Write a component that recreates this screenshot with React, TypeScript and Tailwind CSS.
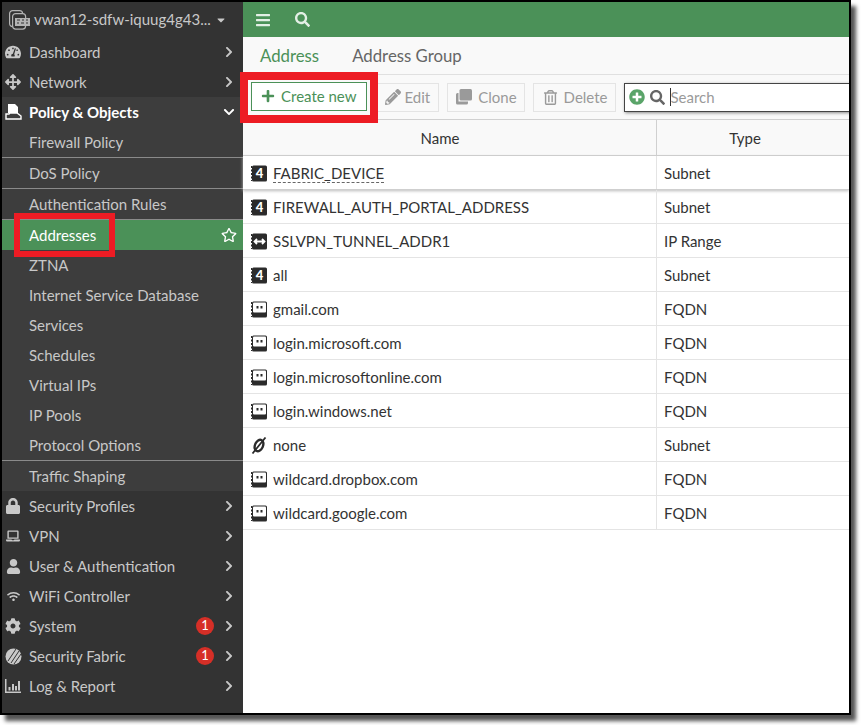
import React from 'react';
import {
  FaTachometerAlt,
  FaArrowsAlt,
  FaLock,
  FaLaptop,
  FaUser,
  FaWifi,
  FaCog,
  FaPencilAlt,
  FaRegTrashAlt,
  FaPlus,
  FaPlusCircle,
  FaSearch,
  FaBars,
  FaChevronRight,
  FaChevronDown,
  FaRegStar,
  FaCaretDown,
} from 'react-icons/fa';

const topItems = [
  { label: 'Dashboard', icon: <FaTachometerAlt size={16} /> },
  { label: 'Network', icon: <FaArrowsAlt size={16} /> },
];

const subItems = [
  { label: 'Firewall Policy', border: true },
  { label: 'DoS Policy', border: true },
  { label: 'Authentication Rules', border: true },
  { label: 'Addresses', active: true },
  { label: 'ZTNA' },
  { label: 'Internet Service Database' },
  { label: 'Services' },
  { label: 'Schedules' },
  { label: 'Virtual IPs' },
  { label: 'IP Pools' },
  { label: 'Protocol Options', border: true },
  { label: 'Traffic Shaping' },
];

const bottomItems = [
  { label: 'Security Profiles', icon: <FaLock size={16} /> },
  { label: 'VPN', icon: <FaLaptop size={14} /> },
  { label: 'User & Authentication', icon: <FaUser size={15} /> },
  { label: 'WiFi Controller', icon: <FaWifi size={13} /> },
  { label: 'System', icon: <FaCog size={16} />, badge: 1 },
  { label: 'Security Fabric', icon: <FabricIcon />, badge: 1 },
  { label: 'Log & Report', icon: <LogIcon /> },
];

const rows = [
  { name: 'FABRIC_DEVICE', type: 'Subnet', kind: 'subnet', first: true },
  { name: 'FIREWALL_AUTH_PORTAL_ADDRESS', type: 'Subnet', kind: 'subnet' },
  { name: 'SSLVPN_TUNNEL_ADDR1', type: 'IP Range', kind: 'range' },
  { name: 'all', type: 'Subnet', kind: 'subnet' },
  { name: 'gmail.com', type: 'FQDN', kind: 'fqdn' },
  { name: 'login.microsoft.com', type: 'FQDN', kind: 'fqdn' },
  { name: 'login.microsoftonline.com', type: 'FQDN', kind: 'fqdn' },
  { name: 'login.windows.net', type: 'FQDN', kind: 'fqdn' },
  { name: 'none', type: 'Subnet', kind: 'none' },
  { name: 'wildcard.dropbox.com', type: 'FQDN', kind: 'fqdn' },
  { name: 'wildcard.google.com', type: 'FQDN', kind: 'fqdn' },
];

function FabricIcon() {
  return (
    <svg width="17" height="17" viewBox="0 0 17 17">
      <circle cx="8.5" cy="8.5" r="8" fill="#c8c8c8" />
      <path d="M3 13L11 1M6 15L14 3M9 16L16 6" stroke="#333" strokeWidth="1" fill="none" />
    </svg>
  );
}

function LogIcon() {
  return (
    <svg width="16" height="14" viewBox="0 0 16 14" fill="#c8c8c8">
      <path d="M0 0h1.5v12.5H16V14H0z" />
      <path d="M3.5 8h2v3.5h-2zM7 5h2v6.5H7zM10 7h2v4.5h-2zM13 2h2v9.5h-2z" />
    </svg>
  );
}

function PolicyIcon() {
  return (
    <svg width="17" height="16" viewBox="0 0 17 16" fill="none">
      <path d="M3 0h7l3 3v6H3z" fill="#fff" />
      <path d="M1 15V10h3l1-1h7l4 3v3z" stroke="#fff" strokeWidth="1.4" />
    </svg>
  );
}

function DeviceIcon() {
  return (
    <svg width="21" height="20" viewBox="0 0 21 20" fill="none">
      <rect x="0.6" y="0.6" width="13" height="16" rx="3" stroke="#b4b4b4" strokeWidth="1.2" />
      <rect x="3.6" y="3.6" width="13" height="15.5" rx="3" fill="#333" stroke="#b4b4b4" strokeWidth="1.2" />
      <rect x="6" y="8" width="15" height="8" fill="#b4b4b4" />
      <path d="M8 10h3M13 10h2M17 10h2M8 13h2M12 13h3M17 13h2" stroke="#333" strokeWidth="1" />
    </svg>
  );
}

function CloneIcon() {
  return (
    <svg width="16" height="16" viewBox="0 0 16 16" fill="#9a9a9a">
      <path d="M5 0h9.5A1.5 1.5 0 0 1 16 1.500V10a1.500 1.500 0 0 1-1.500 1.500H5A1.500 1.500 0 0 1 3.500 10V1.500A1.500 1.500 0 0 1 5 0z" />
      <path d="M2.500 4v8.500H12V14a1.500 1.500 0 0 1-1.500 1.500h-9A1.500 1.500 0 0 1 0 14V5.500A1.500 1.500 0 0 1 1.500 4z" />
    </svg>
  );
}

function AddressIcon({ kind }: { kind: string }) {
  if (kind === 'none') {
    return (
      <svg width="16" height="17" viewBox="0 0 16 17" fill="none" stroke="#2b2b2b">
        <ellipse cx="8" cy="8.5" rx="4" ry="6" transform="rotate(24 8 8.500)" strokeWidth="2.400" />
        <path d="M1.500 16.500L14.500 0.500" strokeWidth="1.800" />
      </svg>
    );
  }
  return (
    <svg width="16" height="17" viewBox="0 0 16 17">
      <rect x="1" y="0.5" width="15" height="16" rx="1.5" fill="#2b2b2b" />
      <path d="M0.5 1v15" stroke="#2b2b2b" strokeDasharray="2 1.5" />
      {kind === 'subnet' && (
        <text x="8.5" y="13" textAnchor="middle" fontSize="13" fontWeight="900" fill="#fff" fontFamily="Lato, sans-serif">
          4
        </text>
      )}
      {kind === 'range' && (
        <path d="M4 8.5h9M6 6L3.500 8.500 6 11M11 6l2.500 2.500L11 11" stroke="#fff" strokeWidth="1.800" fill="none" />
      )}
      {kind === 'fqdn' && (
        <>
          <rect x="2" y="1.500" width="13" height="10" rx="1" fill="#fff" />
          <rect x="5.500" y="5" width="2" height="2.500" fill="#2b2b2b" />
          <rect x="9.500" y="5" width="2" height="2.500" fill="#2b2b2b" />
        </>
      )}
    </svg>
  );
}

function NavRow({ label, icon, badge }: { label: string; icon: React.ReactNode; badge?: number }) {
  return (
    <div className="flex h-[30px] items-center text-[#c8c8c8]">
      <span className="mr-[5px] flex w-[22px] shrink-0 justify-center">{icon}</span>
      <span className="flex-1">{label}</span>
      {badge && (
        <span className="mr-[9px] flex h-[18px] w-[18px] items-center justify-center rounded-full bg-[#d62f27] text-[13px] text-white">
          {badge}
        </span>
      )}
      <FaChevronRight size={12} className="mr-[8px]" />
    </div>
  );
}

export default function App() {
  return (
    <div className="relative h-[725px] w-[861px] bg-white font-['Lato',sans-serif] text-[15px]">
      <div className="flex h-[715px] w-[851px] overflow-hidden border-2 border-black bg-white">
        <aside className="flex w-[241px] shrink-0 flex-col bg-[#333333]">
          <div className="flex h-[35px] items-center pl-[7px] text-[#c8c8c8]">
            <DeviceIcon />
            <span className="ml-[4px] flex-1 whitespace-nowrap">vwan12-sdfw-iquug4g43...</span>
            <FaCaretDown size={12} className="mr-[16px]" />
          </div>
          {topItems.map((item) => (
            <NavRow key={item.label} {...item} />
          ))}
          <div className="bg-[#3d3d3d]">
            <div className="flex h-[30px] items-center font-bold text-white">
              <span className="mr-[5px] flex w-[22px] shrink-0 justify-center">
                <PolicyIcon />
              </span>
              <span className="flex-1">Policy &amp; Objects</span>
              <FaChevronDown size={12} className="mr-[8px]" />
            </div>
            {subItems.map((item) => (
              <div
                key={item.label}
                className={`flex items-center justify-between pl-[27px] ${
                  item.active ? 'h-[30px] bg-[#4b9158] text-white' : 'text-[#c8c8c8]'
                } ${!item.active && item.border ? 'h-[31px] border-b border-[#8a8a8a]' : ''} ${
                  !item.active && !item.border ? 'h-[30px]' : ''
                }`}
              >
                {item.label}
                {item.active && <FaRegStar size={16} className="mr-[6px]" />}
              </div>
            ))}
          </div>
          {bottomItems.map((item) => (
            <NavRow key={item.label} {...item} />
          ))}
        </aside>

        <main className="flex min-w-0 flex-1 flex-col text-[#333]">
          <div className="flex h-[35px] shrink-0 items-center gap-[24px] bg-[#4b9158] pl-[12px] text-[#e3efe5]">
            <FaBars size={16} />
            <FaSearch size={15} />
          </div>
          <div className="flex h-[38px] shrink-0 items-center gap-[33px] border-b border-[#e0e0e0] bg-[#f9f9f9] pl-[17px] text-[16.800px] text-[#666]">
            <span className="text-[#4b9158]">Address</span>
            <span>Address Group</span>
          </div>
          <div className="flex h-[44px] shrink-0 items-center bg-[#f9f9f9] pl-[8px] whitespace-nowrap">
            <button className="mb-[2px] flex h-[29px] shrink-0 items-center gap-[6px] border border-[#4b9158] bg-white pr-[9px] pl-[9px] text-[#4b9158]">
              <FaPlus size={14} />
              Create new
            </button>
            <button className="ml-[10px] flex h-[29px] shrink-0 items-center gap-[4px] border border-[#e4e4e4] pr-[8px] pl-[7px] text-[#9a9a9a]">
              <FaPencilAlt size={16} />
              Edit
            </button>
            <button className="ml-[8px] flex h-[29px] shrink-0 items-center gap-[6px] border border-[#e4e4e4] pr-[7px] pl-[8px] text-[#9a9a9a]">
              <CloneIcon />
              Clone
            </button>
            <button className="ml-[8px] flex h-[29px] shrink-0 items-center gap-[6px] border border-[#e4e4e4] pr-[7px] pl-[9px] text-[#9a9a9a]">
              <FaRegTrashAlt size={15} />
              Delete
            </button>
            <div className="ml-[8px] flex h-[29px] w-[260px] shrink-0 items-center gap-[5px] border border-[#444] bg-white pl-[4px] text-[#9a9a9a] shadow-[1px_1px_3px_#888]">
              <FaPlusCircle size={16} className="text-[#5aa469]" />
              <FaSearch size={15} className="text-[#666]" />
              <span className="border-l border-[#333] leading-[18px]">Search</span>
            </div>
          </div>
          <div className="flex h-[37px] shrink-0 border-y border-[#d0d0d0] bg-[#f9f9f9] text-center">
            <div className="flex w-[414px] items-center justify-center border-r border-[#d0d0d0] pt-px pr-[19px]">Name</div>
            <div className="flex flex-1 items-center justify-center pt-px pr-[16px]">Type</div>
          </div>
          {rows.map((row) => (
            <div
              key={row.name}
              className={`flex h-[34px] shrink-0 items-center border-b ${
                row.first ? 'border-[#cfcfcf] shadow-[0_1px_3px_#bbb]' : 'border-[#e4e4e4]'
              }`}
            >
              <div className="flex h-full w-[414px] items-center gap-[6px] border-r border-[#e4e4e4] pt-[1px] pl-[8px]">
                <AddressIcon kind={row.kind} />
                <span className={row.first ? 'mt-[1px] border-b border-dashed border-[#666] leading-[18px]' : ''}>
                  {row.name}
                </span>
              </div>
              <div className="pt-[1px] pl-[7px]">{row.type}</div>
            </div>
          ))}
        </main>
      </div>

      {/* annotation boxes and window shadow */}
      <div className="pointer-events-none absolute top-[213px] left-[14px] h-[44px] w-[101px] border-[6px] border-[#ed1c24]" />
      <div className="pointer-events-none absolute top-[72px] left-[240px] h-[51px] w-[138px] border-[8px] border-[#ed1c24]" />
      <div className="pointer-events-none absolute top-0 left-0 h-[715px] w-[851px] shadow-[5px_6px_4px_#555]" />
    </div>
  );
}
